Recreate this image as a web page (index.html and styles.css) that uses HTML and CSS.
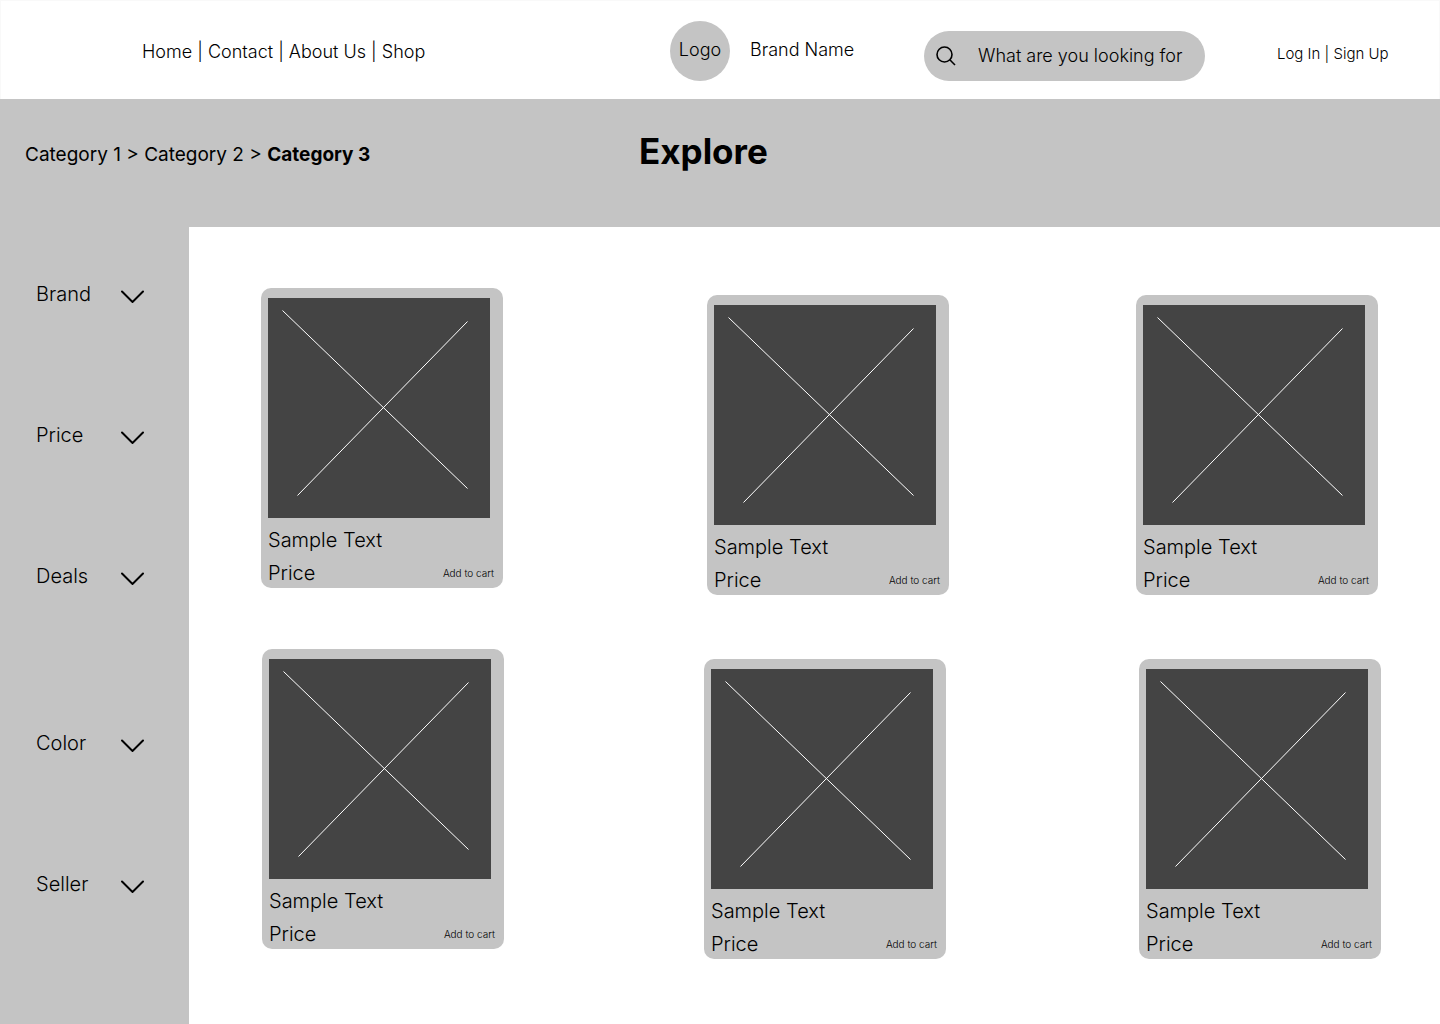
FILE: index.html
```html
<!DOCTYPE html>
<html lang="en">
<head>
  <meta charset="utf-8">
  <meta name="viewport" content="width=device-width, initial-scale=1">
  <title>Explore</title>
  <link rel="stylesheet" href="styles.css">
</head>
<body>
  <svg class="sprite" aria-hidden="true">
    <symbol id="chevron" viewBox="0 0 23 18"><path d="M1 6.500 11.500 17 22 6.500" fill="none" stroke="#000" stroke-width="2" stroke-linecap="round"/></symbol>
    <symbol id="placeholder" viewBox="0 0 222 220"><path d="M14.500 12.500 199.500 190.500M199.500 23.500 29.500 197.500" fill="none" stroke="#fff" stroke-width="1"/></symbol>
  </svg>

  <header class="header">
    <nav class="nav" aria-label="Main">
      <a href="#">Home</a> | <a href="#">Contact</a> | <a href="#">About Us</a> | <a href="#">Shop</a>
    </nav>
    <a class="brand" href="#">
      <span class="logo">Logo</span>
      <span>Brand Name</span>
    </a>
    <form class="search" role="search">
      <label for="search">
        <svg class="search-icon" viewBox="0 0 20 20" role="img" aria-label="Search"><circle cx="8.500" cy="8.500" r="7.500" fill="none" stroke="#000" stroke-width="1.600"/><path d="M13.800 13.800 19 19" stroke="#000" stroke-width="1.600"/></svg>
      </label>
      <input id="search" type="search" placeholder="What are you looking for">
    </form>
    <div class="account"><a href="#">Log In</a> | <a href="#">Sign Up</a></div>
  </header>

  <section class="banner">
    <nav class="breadcrumb" aria-label="Breadcrumb">
      <a href="#">Category 1</a> &gt; <a href="#">Category 2</a> &gt; <a class="current" href="#" aria-current="page">Category 3</a>
    </nav>
    <h1>Explore</h1>
  </section>

  <div class="content">
    <aside class="sidebar" aria-label="Filters">
      <div class="filter-group">
        <button class="filter" type="button">Brand<svg class="chevron"><use href="#chevron"/></svg></button>
        <button class="filter" type="button">Price<svg class="chevron"><use href="#chevron"/></svg></button>
        <button class="filter" type="button">Deals<svg class="chevron"><use href="#chevron"/></svg></button>
      </div>
      <div class="filter-group">
        <button class="filter" type="button">Color<svg class="chevron"><use href="#chevron"/></svg></button>
        <button class="filter" type="button">Seller<svg class="chevron"><use href="#chevron"/></svg></button>
      </div>
    </aside>

    <main class="products">
      <div class="row row-first">
        <article class="card">
          <svg class="picture"><use href="#placeholder"/></svg>
          <h2>Sample Text</h2>
          <div class="card-foot"><span>Price</span><button class="add" type="button">Add to cart</button></div>
        </article>
        <article class="card">
          <svg class="picture"><use href="#placeholder"/></svg>
          <h2>Sample Text</h2>
          <div class="card-foot"><span>Price</span><button class="add" type="button">Add to cart</button></div>
        </article>
        <article class="card">
          <svg class="picture"><use href="#placeholder"/></svg>
          <h2>Sample Text</h2>
          <div class="card-foot"><span>Price</span><button class="add" type="button">Add to cart</button></div>
        </article>
      </div>
      <div class="row row-second">
        <article class="card">
          <svg class="picture"><use href="#placeholder"/></svg>
          <h2>Sample Text</h2>
          <div class="card-foot"><span>Price</span><button class="add" type="button">Add to cart</button></div>
        </article>
        <article class="card">
          <svg class="picture"><use href="#placeholder"/></svg>
          <h2>Sample Text</h2>
          <div class="card-foot"><span>Price</span><button class="add" type="button">Add to cart</button></div>
        </article>
        <article class="card">
          <svg class="picture"><use href="#placeholder"/></svg>
          <h2>Sample Text</h2>
          <div class="card-foot"><span>Price</span><button class="add" type="button">Add to cart</button></div>
        </article>
      </div>
    </main>
  </div>
</body>
</html>
```
FILE: styles.css
```css
* {
  box-sizing: border-box;
}

body {
  display: flex;
  flex-direction: column;
  min-height: 100vh;
  margin: 0;
  background: #fff;
  color: #000;
  font-family: Inter, "Liberation Sans", sans-serif;
  font-size: 20px;
  font-weight: 300;
  line-height: 24px;
}

a {
  color: inherit;
  text-decoration: none;
}

button,
input {
  padding: 0;
  border: 0;
  background: none;
  color: inherit;
  font: inherit;
}

button {
  cursor: pointer;
}

.sprite {
  position: absolute;
  width: 0;
  height: 0;
}

/* Header */
.header {
  display: grid;
  grid-template-columns: 669fr 254fr 353fr 162fr;
  align-items: end;
  padding: 20px 0 18px;
  border: 1px solid #f9f9f9;
  border-bottom: 0;
  font-size: 18px;
  white-space: nowrap;
}

.nav {
  padding-left: 141px;
  line-height: 58px;
}

.brand {
  display: flex;
  gap: 20px;
  line-height: 58px;
}

.logo {
  width: 60px;
  height: 60px;
  border-radius: 50%;
  background: #c4c4c4;
  text-align: center;
}

.search {
  display: flex;
  align-items: center;
  gap: 22px;
  width: 281px;
  height: 50px;
  padding: 0 12px;
  border-radius: 25px;
  background: #c4c4c4;
}

.search-icon {
  display: block;
  width: 20px;
  height: 20px;
}

.search input {
  flex: 1;
  min-width: 0;
  appearance: none;
}

.search input::-webkit-search-cancel-button,
.search input::-webkit-search-decoration {
  display: none;
}

.search input::placeholder {
  color: #000;
  opacity: 1;
}

.account {
  font-size: 15px;
  line-height: 54px;
}

/* Banner */
.banner {
  display: grid;
  grid-template-columns: 639fr 801fr;
  align-items: end;
  padding: 30px 0 54px;
  background: #c4c4c4;
}

.breadcrumb {
  padding-left: 25px;
  font-size: 19px;
  font-weight: 400;
  line-height: 36px;
}

.current {
  font-weight: 700;
}

h1 {
  margin: 0;
  font-size: 35px;
  line-height: 44px;
}

/* Filters */
.content {
  display: flex;
  flex: 1;
}

.sidebar {
  display: flex;
  flex: none;
  flex-direction: column;
  gap: 143px;
  width: 189px;
  padding: 55px 45px 0 36px;
  background: #c4c4c4;
}

.filter-group {
  display: flex;
  flex-direction: column;
  gap: 117px;
}

.filter {
  display: flex;
  justify-content: space-between;
  align-items: center;
}

.chevron {
  width: 23px;
  height: 18px;
  overflow: visible;
}

/* Products */
.products {
  display: flex;
  flex: 1;
  flex-direction: column;
  gap: 54px;
  padding: 61px 0;
}

.row {
  display: grid;
  align-items: end;
}

.row-first {
  grid-template-columns: 446fr 429fr 304fr;
  min-height: 307px;
  padding-left: 72px;
}

.row-second {
  grid-template-columns: 442fr 435fr 301fr;
  min-height: 310px;
  padding-left: 73px;
}

.card {
  width: 242px;
  height: 300px;
  padding: 10px 9px 0 7px;
  border-radius: 10px;
  background: #c4c4c4;
}

.card:first-child {
  align-self: start;
}

.picture {
  display: block;
  width: 222px;
  height: 220px;
  background: #444;
}

.card h2 {
  margin: 10px 0 9px;
  font-size: 20px;
  font-weight: 300;
}

.card-foot {
  display: flex;
  justify-content: space-between;
  align-items: center;
}

.add {
  font-size: 10px;
}
```
